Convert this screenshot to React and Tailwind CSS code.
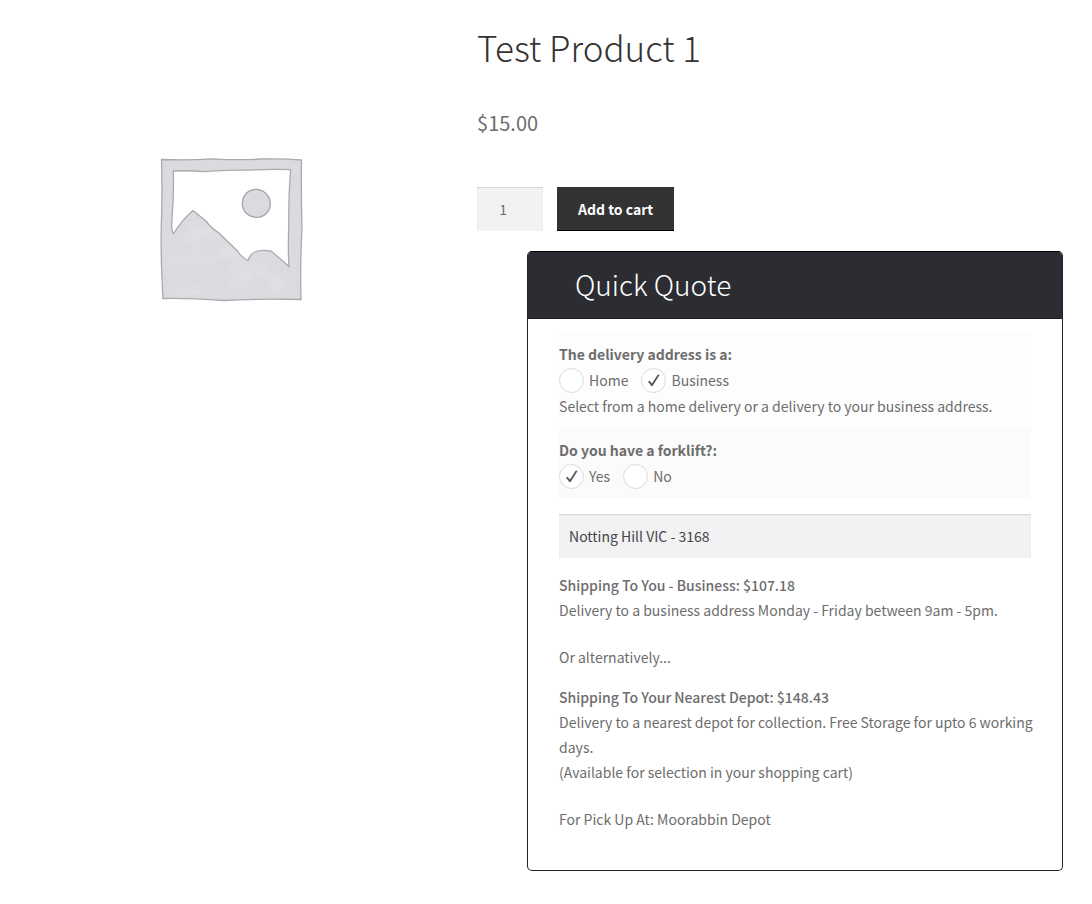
import { useState } from 'react';

const ProductPlaceholder = () => (
  <svg viewBox="0 0 170 170" className="w-[170px] h-[170px]" role="img" aria-label="Awaiting product image">
    <defs>
      <filter id="wash" x="0" y="0" width="100%" height="100%">
        <feTurbulence type="fractalNoise" baseFrequency="0.05" numOctaves="2" seed="4" />
        <feColorMatrix values="0 0 0 0 0.78  0 0 0 0 0.78  0 0 0 0 0.8  1.4 0 0 0 -0.55" />
        <feComposite in2="SourceGraphic" operator="in" />
      </filter>
    </defs>
    <path
      d="M12.5 14.5 Q40 15.5 62 13.8 Q90 15.5 112 14 Q136 13.5 152.5 15 Q152 50 153 82 Q151 120 152 154.5 Q110 153.5 75 155.5 Q40 153 14 153.5 Q11.5 110 12.3 80 Q13.5 48 12.5 14.5 Z"
      fill="#dadbdf" stroke="#a9aaae" strokeWidth="1.3"
    />
    <path
      d="M22 70 L44 68 L80 97 L98 116 L122 107 L138 121 V150 H18 Z"
      fill="#dadbdf" filter="url(#wash)"
    />
    <path
      d="M24.3 26 Q42 25.3 54 26.7 Q76 24.6 98 25.2 Q120 24 141.5 24.7 Q139.5 55 139.8 80 Q138.8 104 140 121.5 Q130 112.5 122 106 Q111 104.5 106 107 Q101 109 99 115.5 Q93 113 88.5 106 Q78 96 70 88 Q62 83 57 76 L44 65.5 Q34 74 24.5 88.5 Q22 86 23 74 Q25 50 24.3 26 Z"
      fill="#fff" stroke="#a9aaae" strokeWidth="1.3"
    />
    <path
      d="M107.500 44.300 C115 44.500 121.300 51 121.300 59 C121.300 66.500 115 72.300 107.500 72.300 C99.500 72 93.300 66.500 93.300 58.500 C93.300 50.500 99.500 44 107.500 44.300 Z"
      fill="#dadbdf" stroke="#a3a4a8" strokeWidth="1.3"
    />
  </svg>
);

const RoundOption = ({ name, label, checked, onChange }) => (
  <label className="flex items-center gap-[5px]">
    <span className="relative size-[25px] shrink-0">
      <input
        type="radio"
        name={name}
        checked={checked}
        onChange={onChange}
        className="block size-[25px] appearance-none rounded-full border border-[#dcdcdc] bg-white"
      />
      {checked && (
        <svg viewBox="0 0 25 25" className="pointer-events-none absolute inset-0 size-[25px]" aria-hidden="true">
          <path d="M7 13.7 L8.5 12.7 L11 15.5 L16.8 6.5 L18.5 7 L11.6 17.9 L10.4 17.9 Z" fill="#555" />
        </svg>
      )}
    </span>
    <span>{label}</span>
  </label>
);

const OptionGroup = ({ name, title, options, value, onChange, className, children }) => (
  <fieldset className={`py-[9px] ${className}`}>
    <legend className="contents">
      <span className="block font-bold">{title}</span>
    </legend>
    <div className="flex h-[26px] items-center gap-[13px]">
      {options.map((option) => (
        <RoundOption key={option} name={name} label={option} checked={value === option} onChange={() => onChange(option)} />
      ))}
    </div>
    {children}
  </fieldset>
);

const QuickQuote = () => {
  const [address, setAddress] = useState('Business');
  const [forklift, setForklift] = useState('Yes');

  return (
    <section className="mt-5 mr-px ml-[50px] overflow-hidden rounded-[5px] border-x border-b border-[#222327] bg-white">
      <h2 className="border-y border-t-black border-b-[#1d1e22] bg-[#2c2d33] pb-0.5 pl-[47px] text-[28px] leading-[64px] font-light text-white">Quick Quote</h2>

      <div className="px-[31px] pt-[13px] pb-[38px]">
        <OptionGroup
          name="address"
          title="The delivery address is a:"
          options={['Home', 'Business']}
          value={address}
          onChange={setAddress}
          className="bg-[#fdfdfd]"
        >
          <p>Select from a home delivery or a delivery to your business address.</p>
        </OptionGroup>
        <OptionGroup
          name="forklift"
          title="Do you have a forklift?:"
          options={['Yes', 'No']}
          value={forklift}
          onChange={setForklift}
          className="bg-[#fbfbfb]"
        />

        <input
          type="text"
          aria-label="Delivery suburb"
          defaultValue="Notting Hill VIC - 3168"
          className="mt-4 block h-11 w-full bg-[#f2f2f2] px-2.5 text-[#43454b] shadow-[inset_0_1px_1px_rgba(0,0,0,0.125)] outline-none"
        />

        <div className="mt-[15px] -mr-1 leading-[25px]">
          <p className="font-medium">Shipping To You - Business: $107.18</p>
          <p>Delivery to a business address Monday - Friday between 9am - 5pm.</p>
          <p className="mt-[22px]">Or alternatively...</p>
          <p className="mt-[15px] font-medium">Shipping To Your Nearest Depot: $148.43</p>
          <p>Delivery to a nearest depot for collection. Free Storage for upto 6 working days.</p>
          <p>(Available for selection in your shopping cart)</p>
          <p className="mt-[22px]">For Pick Up At: Moorabbin Depot</p>
        </div>
      </div>
    </section>
  );
};

export default function App() {
  return (
    <main className="grid min-h-screen grid-cols-[42fr_58fr] items-start gap-8 bg-white pt-5 pr-7 pb-8 pl-5 font-['Noto_Sans_CJK_SC',sans-serif] text-[14px] leading-[26px] text-[#6d6d6d]">
      {/* GALLERY */}
      <div className="flex justify-center pt-[125px] pl-[3px]">
        <ProductPlaceholder />
      </div>

      {/* SUMMARY */}
      <div>
        <h1 className="text-[35px] leading-[54px] font-light text-[#333]">Test Product 1</h1>
        <p className="mt-9 text-[20px] leading-[26px]">$15.00</p>

        <form className="mt-[51px] flex gap-3.5" onSubmit={(e) => e.preventDefault()}>
          <input
            type="text"
            inputMode="numeric"
            aria-label="Quantity"
            defaultValue="1"
            className="h-11 w-[66px] bg-[#f2f2f2] pr-3.5 text-center text-[#6d6d6d] shadow-[inset_0_1px_1px_rgba(0,0,0,0.125)] outline-none"
          />
          <button type="submit" className="h-11 border-b border-black bg-[#333] px-[21px] font-bold text-white">Add to cart</button>
        </form>

        <QuickQuote />
      </div>
    </main>
  );
}
